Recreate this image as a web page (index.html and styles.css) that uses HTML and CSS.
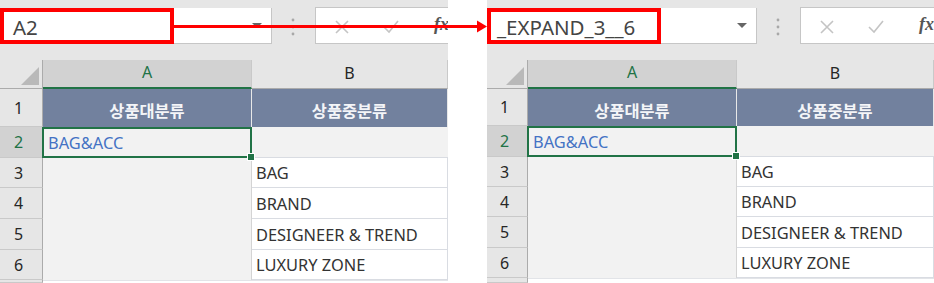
FILE: index.html
```html
<!DOCTYPE html>
<html lang="ko">

<head>
    <meta charset="UTF-8">
    <title>이름 상자 비교</title>
    <link rel="stylesheet" href="styles.css">
</head>

<body>
    <div class="shots">
        <section class="sheet sheet-left">
            <div class="toolbar">
                <div class="namebox">
                    <span class="mark">A2</span>
                    <span class="drop"></span>
                </div>
                <svg class="dots" width="4" height="18" viewBox="0 0 4 18">
                    <circle cx="2" cy="2" r="1.4" />
                    <circle cx="2" cy="9" r="1.4" />
                    <circle cx="2" cy="16" r="1.4" />
                </svg>
                <div class="formula">
                    <svg class="icon-x" width="14" height="14" viewBox="0 0 14 14">
                        <path d="M1 1 L13 13 M13 1 L1 13" />
                    </svg>
                    <svg class="icon-ok" width="16" height="14" viewBox="0 0 16 14">
                        <path d="M1 7 L6 12 L15 1" />
                    </svg>
                    <span class="fx">fx</span>
                </div>
            </div>
            <div class="grid">
                <div class="corner"></div>
                <div class="colhead sel">A</div>
                <div class="colhead">B</div>

                <div class="rowhead">1</div>
                <div class="cell title">상품대분류</div>
                <div class="cell title">상품중분류</div>

                <div class="rowhead sel">2</div>
                <div class="cell active">BAG&amp;ACC</div>
                <div class="cell shade"></div>

                <div class="rowhead">3</div>
                <div class="cell merged"></div>
                <div class="cell item">BAG</div>
                <div class="rowhead">4</div>
                <div class="cell item">BRAND</div>
                <div class="rowhead">5</div>
                <div class="cell item">DESIGNEER &amp; TREND</div>
                <div class="rowhead">6</div>
                <div class="cell item">LUXURY ZONE</div>

                <div class="rowhead"></div>
                <div class="cell tail"></div>
                <div class="cell tail"></div>
            </div>
        </section>

        <section class="sheet sheet-right">
            <div class="toolbar">
                <div class="namebox">
                    <span class="mark">_EXPAND_3__6</span>
                    <span class="drop"></span>
                </div>
                <svg class="dots" width="4" height="18" viewBox="0 0 4 18">
                    <circle cx="2" cy="2" r="1.4" />
                    <circle cx="2" cy="9" r="1.4" />
                    <circle cx="2" cy="16" r="1.4" />
                </svg>
                <div class="formula">
                    <svg class="icon-x" width="14" height="14" viewBox="0 0 14 14">
                        <path d="M1 1 L13 13 M13 1 L1 13" />
                    </svg>
                    <svg class="icon-ok" width="16" height="14" viewBox="0 0 16 14">
                        <path d="M1 7 L6 12 L15 1" />
                    </svg>
                    <span class="fx">fx</span>
                </div>
            </div>
            <div class="grid">
                <div class="corner"></div>
                <div class="colhead sel">A</div>
                <div class="colhead">B</div>

                <div class="rowhead">1</div>
                <div class="cell title">상품대분류</div>
                <div class="cell title">상품중분류</div>

                <div class="rowhead sel">2</div>
                <div class="cell active">BAG&amp;ACC</div>
                <div class="cell shade"></div>

                <div class="rowhead">3</div>
                <div class="cell merged"></div>
                <div class="cell item">BAG</div>
                <div class="rowhead">4</div>
                <div class="cell item">BRAND</div>
                <div class="rowhead">5</div>
                <div class="cell item">DESIGNEER &amp; TREND</div>
                <div class="rowhead">6</div>
                <div class="cell item">LUXURY ZONE</div>

                <div class="rowhead"></div>
                <div class="cell tail"></div>
                <div class="cell tail"></div>
            </div>
        </section>

        <!-- red arrow from the first name box to the second -->
        <svg class="arrow" width="934" height="60" viewBox="0 0 934 60">
            <line x1="174" y1="26.5" x2="479" y2="26.5" />
            <polygon points="477,20.5 487,26.5 477,32.5" />
        </svg>
    </div>
</body>

</html>
```

FILE: styles.css
```css
body {
    margin: 0;
    padding: 0;
    background: #ffffff;
    font-family: 'Noto Sans', 'Noto Sans CJK KR', sans-serif;
    color: #333333;
}

.shots {
    position: relative;
    display: flex;
    gap: 39px;
    width: 934px;
    height: 283px;
    overflow: hidden;
}

.sheet {
    display: flex;
    flex-direction: column;
    overflow: hidden;
}

.sheet-left {
    width: 448px;
    --namebox: 272px;
    --rowhead: 43px;
}

.sheet-right {
    width: 447px;
    --namebox: 270px;
    --rowhead: 41px;
}

/* name box + formula bar */
.toolbar {
    display: flex;
    align-items: flex-start;
    height: 60px;
    padding-top: 8px;
    box-sizing: border-box;
    background: #e6e6e6;
}

.namebox {
    display: flex;
    align-items: center;
    justify-content: space-between;
    width: var(--namebox);
    height: 36px;
    box-sizing: border-box;
    background: #ffffff;
    border-right: 1px solid #c6c6c6;
    border-bottom: 1px solid #c6c6c6;
}

.mark {
    display: flex;
    align-items: center;
    width: 174px;
    height: 36px;
    box-sizing: border-box;
    padding: 3px 0 0 9px;
    border: 4px solid #ff0000;
    font-size: 20.5px;
    color: #444444;
}

.sheet-right .mark {
    padding-left: 6px;
}

.drop {
    width: 0;
    height: 0;
    margin-right: 9px;
    border-left: 5px solid transparent;
    border-right: 5px solid transparent;
    border-top: 5px solid #666666;
}

.dots {
    margin: 10px 0 0 19px;
    fill: #a8a8a8;
}

.formula {
    position: relative;
    flex: 1;
    height: 37px;
    margin: -1px 0 0 20px;
    box-sizing: border-box;
    background: #ffffff;
    border: 1px solid #c6c6c6;
    border-right: none;
}

.formula svg {
    position: absolute;
    top: 12px;
    fill: none;
    stroke: #c4c4c4;
    stroke-width: 1.6;
}

.icon-x {
    left: 19px;
}

.icon-ok {
    left: 67px;
}

.fx {
    position: absolute;
    left: 118px;
    top: 6px;
    font-family: 'Liberation Serif', serif;
    font-style: italic;
    font-weight: bold;
    font-size: 18px;
    color: #555555;
}

/* sheet cells */
.grid {
    display: grid;
    grid-template-columns: var(--rowhead) 209px 1fr;
    font-size: 16.4px;
}

.sheet-left .grid {
    grid-template-rows: 29px 38px 31px 30px 31px 31px 30px 3px;
}

.sheet-right .grid {
    grid-template-rows: 29px 37px 31px 30px 30px 31px 30px 5px;
}

.corner {
    position: relative;
    background: #e6e6e6;
    border-right: 1px solid #ababab;
    border-bottom: 1px solid #ababab;
}

.corner::after {
    content: '';
    position: absolute;
    right: 3px;
    bottom: 3px;
    border-left: 18px solid transparent;
    border-bottom: 18px solid #b9b9b9;
}

.colhead {
    display: flex;
    align-items: center;
    justify-content: center;
    padding-bottom: 3px;
    box-sizing: border-box;
    background: #e6e6e6;
    border-right: 1px solid #c9c9c9;
    border-bottom: 1px solid #ababab;
    font-size: 16px;
    color: #262626;
}

.colhead.sel {
    background: #d2d2d2;
    color: #217346;
    border-bottom: 2px solid #217346;
}

.rowhead {
    display: flex;
    align-items: center;
    justify-content: center;
    padding-right: 5px;
    box-sizing: border-box;
    background: #e6e6e6;
    border-right: 1px solid #ababab;
    border-bottom: 1px solid #c9c9c9;
    font-size: 16px;
    color: #262626;
}

.rowhead.sel {
    background: #d2d2d2;
    color: #217346;
}

.cell {
    display: flex;
    align-items: center;
    padding-left: 4px;
    box-sizing: border-box;
    white-space: nowrap;
}

.title {
    justify-content: center;
    padding: 4px 0 0;
    background: #72819e;
    border-right: 1px solid #e8e8e8;
    font-family: 'Noto Sans CJK KR', sans-serif;
    font-weight: bold;
    color: #f4f5f8;
}

.active {
    position: relative;
    background: #f2f2f2;
    border: 2px solid #217346;
    margin-left: -1px;
    color: #4472c4;
}

.active::after {
    content: '';
    position: absolute;
    right: -5px;
    bottom: -5px;
    width: 6px;
    height: 6px;
    background: #217346;
    border: 1px solid #ffffff;
    z-index: 1;
}

.shade {
    background: #f2f2f2;
    border-bottom: 1px solid #d9dce2;
}

.merged {
    grid-row: span 4;
    background: #f2f2f2;
    border-right: 1px solid #d4d4d4;
}

.item {
    background: #ffffff;
    border-right: 1px solid #d9dce2;
    border-bottom: 1px solid #d9dce2;
    color: #333333;
}

.tail {
    background: #ffffff;
    border-top: 1px solid #e2e4e8;
}

.arrow {
    position: absolute;
    left: 0;
    top: 0;
    pointer-events: none;
}

.arrow line {
    stroke: #ff0000;
    stroke-width: 3;
}

.arrow polygon {
    fill: #ff0000;
}
```
